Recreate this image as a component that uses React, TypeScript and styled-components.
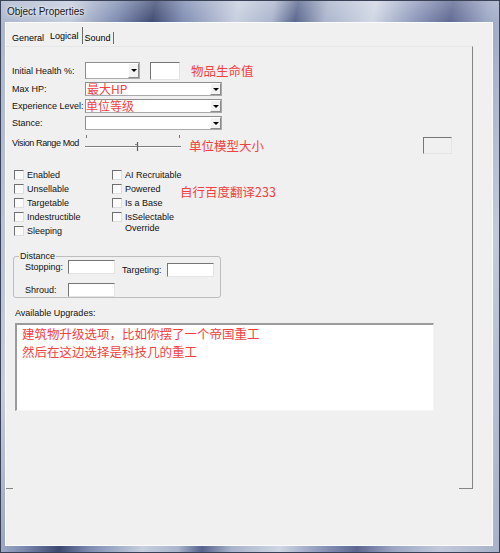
import React from "react";
import styled, { createGlobalStyle } from "styled-components";

const GlobalStyle = createGlobalStyle`
  html, body { margin: 0; padding: 0; background: #ffffff; }
  body { font-family: "Liberation Sans", "DejaVu Sans", sans-serif; }
  *, *::before, *::after { box-sizing: border-box; }
`;

const Window = styled.div`
  width: 500px;
  height: 553px;
  display: flex;
  flex-direction: column;
  padding: 0 6px 6px 4px;
  border: 1px solid #3a4257;
  background:
    linear-gradient(180deg, rgba(255, 255, 255, 0.22), rgba(255, 255, 255, 0) 24px),
    linear-gradient(100deg, #aab5cc 0%, #c3cbdc 12%, #7c8ab0 20%, #3c4870 26%, #7d8bb1 31%,
      #c6cedf 40%, #aab4cc 46%, #56638b 50%, #a9b3cb 55%, #cfd6e4 63%, #8d98bb 70%,
      #5c6690 76%, #9aa5c3 82%, #c2c9da 90%, #a7b1c8 100%);
`;

const TitleBar = styled.div`
  height: 21px;
  line-height: 21px;
  padding-left: 2px;
  font-size: 10px;
  color: #141414;
  text-shadow: 0 0 5px rgba(255, 255, 255, 0.95), 0 0 2px rgba(255, 255, 255, 0.9);
  white-space: nowrap;
`;

const Client = styled.div`
  flex: 1;
  display: flex;
  flex-direction: column;
  background: #f0f0f0;
  border: 1px solid #fbfcfe;
`;

const TabStrip = styled.div`
  height: 23px;
  display: flex;
  align-items: flex-start;
  padding-left: 6px;
`;

const Tab = styled.div<{ $active?: boolean; $gap: number }>`
  font-size: 9px;
  line-height: 12px;
  color: #000;
  margin-left: ${(p) => p.$gap}px;
  margin-top: ${(p) => (p.$active ? 7 : 9)}px;
  white-space: nowrap;
`;

const TabDivider = styled.div<{ $top: number; $gap: number }>`
  width: 1px;
  height: ${(p) => 21 - p.$top}px;
  margin-top: ${(p) => p.$top}px;
  margin-left: ${(p) => p.$gap}px;
  background: #6a6a6a;
`;

const Page = styled.div`
  flex: none;
  width: 467px;
  height: 443px;
  border-top: 1px solid #e6e6e6;
  border-right: 1px solid #858585;
  padding: 15px 0 0 6px;
  display: flex;
  flex-direction: column;
  background:
    linear-gradient(#858585, #858585) no-repeat left bottom / 7px 1px,
    linear-gradient(#858585, #858585) no-repeat right bottom / 13px 1px;
`;

const FieldRows = styled.div`
  display: flex;
  flex-direction: column;
  gap: 3px;
`;

const FieldRow = styled.div<{ $h: number }>`
  height: ${(p) => p.$h}px;
  display: flex;
  align-items: center;
`;

const FieldLabel = styled.div<{ $w?: number; $tight?: boolean }>`
  width: ${(p) => p.$w ?? 73}px;
  flex: none;
  font-size: 9px;
  line-height: 14px;
  letter-spacing: ${(p) => (p.$tight ? "-0.4px" : "0")};
  color: #111;
  white-space: nowrap;
`;

const Combo = styled.div<{ $w: number; $h: number }>`
  width: ${(p) => p.$w}px;
  height: ${(p) => p.$h}px;
  flex: none;
  display: flex;
  background: #ffffff;
  border: 1px solid #a9a9a9;
  border-top-color: #8e8e8e;
  border-left-color: #8e8e8e;
`;

const ComboValue = styled.div<{ $indent: number }>`
  flex: 1;
  padding-left: ${(p) => p.$indent}px;
  display: flex;
  align-items: center;
  overflow: visible;
  white-space: nowrap;
`;

const DropButton = styled.div`
  width: 11px;
  flex: none;
  display: flex;
  align-items: center;
  justify-content: center;
  background: #f2f2f2;
  border-left: 1px solid #ffffff;
  border-top: 1px solid #ffffff;
  border-right: 1px solid #8a8a8a;
  border-bottom: 1px solid #8a8a8a;
`;

const Arrow = styled.span`
  width: 0;
  height: 0;
  border-left: 3px solid transparent;
  border-right: 3px solid transparent;
  border-top: 3px solid #000;
`;

const TextBox = styled.div<{ $w: number; $h: number; $gap?: number; $hollow?: boolean; $drop?: number; $right?: number }>`
  width: ${(p) => p.$w}px;
  height: ${(p) => p.$h}px;
  flex: none;
  margin-left: ${(p) => p.$gap ?? 0}px;
  margin-right: ${(p) => p.$right ?? 0}px;
  margin-top: ${(p) => p.$drop ?? 0}px;
  background: ${(p) => (p.$hollow ? "transparent" : "#ffffff")};
  border-top: 1px solid #767676;
  border-left: 1px solid #767676;
  border-right: 1px solid #e4e4e4;
  border-bottom: 1px solid #e4e4e4;
`;

const Note = styled.div<{ $gap?: number; $drop?: number; $small?: boolean }>`
  margin-left: ${(p) => p.$gap ?? 0}px;
  margin-top: ${(p) => p.$drop ?? 0}px;
  font-family: "Noto Sans CJK SC", "Liberation Sans", sans-serif;
  font-size: ${(p) => (p.$small ? "12px" : "12.5px")};
  line-height: 14px;
  color: #f23f3f;
  white-space: nowrap;
`;

const SliderBox = styled.svg`
  flex: none;
  display: block;
`;

const CheckArea = styled.div`
  display: flex;
  margin: 15px 0 0 2px;
`;

const CheckColumn = styled.div<{ $w: number }>`
  width: ${(p) => p.$w}px;
  flex: none;
  display: flex;
  flex-direction: column;
`;

const CheckRow = styled.div`
  min-height: 14px;
  display: flex;
  align-items: flex-start;
`;

const CheckBox = styled.span`
  width: 10px;
  height: 10px;
  flex: none;
  margin-top: 2px;
  background: #fbfbfb;
  border-top: 1px solid #6f6f6f;
  border-left: 1px solid #6f6f6f;
  border-right: 1px solid #dedede;
  border-bottom: 1px solid #dedede;
`;

const CheckLabel = styled.span<{ $multi?: boolean }>`
  margin-left: 3px;
  font-size: 9px;
  line-height: ${(p) => (p.$multi ? "11px" : "14px")};
  padding-top: ${(p) => (p.$multi ? 2 : 0)}px;
  color: #111;
  white-space: pre;
`;

const Group = styled.fieldset`
  width: 208px;
  min-width: 0;
  margin: 14px 0 0 1px;
  padding: 0 6px 0 11px;
  border: 1px solid #bdbdbd;
  border-radius: 3px;
`;

const Legend = styled.legend`
  margin-left: -6px;
  padding: 0 1px;
  font-size: 9px;
  line-height: 8px;
  color: #111;
`;

const GroupRow = styled.div<{ $h: number; $gap?: number }>`
  height: ${(p) => p.$h}px;
  margin-top: ${(p) => p.$gap ?? 0}px;
  display: flex;
  align-items: flex-start;
`;

const GroupCell = styled.div<{ $gap?: number; $drop?: number }>`
  display: flex;
  align-items: center;
  margin-left: ${(p) => p.$gap ?? 0}px;
  margin-top: ${(p) => p.$drop ?? 0}px;
`;

const SectionLabel = styled.div`
  margin: 9px 0 0 3px;
  font-size: 9px;
  line-height: 12px;
  color: #111;
`;

const ListBox = styled.div`
  width: 419px;
  height: 88px;
  margin: 4px 0 0 3px;
  padding-left: 5px;
  background: #ffffff;
  border-top: 2px solid #9b9b9b;
  border-left: 2px solid #9b9b9b;
  border-right: 1px solid #f6f6f6;
  border-bottom: 1px solid #f6f6f6;
`;

const ListLine = styled.div`
  font-family: "Noto Sans CJK SC", "Liberation Sans", sans-serif;
  font-size: 12.5px;
  line-height: 18px;
  color: #f23f3f;
  white-space: nowrap;
`;

const Spacer = styled.div`
  margin-left: auto;
`;

function ComboBox({ w, h, children, indent = 1 }: { w: number; h: number; children?: React.ReactNode; indent?: number }) {
  return (
    <Combo $w={w} $h={h}>
      <ComboValue $indent={indent}>{children}</ComboValue>
      <DropButton>
        <Arrow />
      </DropButton>
    </Combo>
  );
}

function Slider() {
  return (
    <SliderBox width="96" height="20" viewBox="0 0 96 20">
      <line x1="1.5" y1="2" x2="1.5" y2="5" stroke="#777" strokeWidth="1" />
      <line x1="94.5" y1="2" x2="94.5" y2="5" stroke="#777" strokeWidth="1" />
      <line x1="0" y1="13.5" x2="96" y2="13.5" stroke="#7d7d7d" strokeWidth="1" />
      <line x1="0" y1="14.5" x2="96" y2="14.5" stroke="#ffffff" strokeWidth="1" />
      <line x1="50" y1="11.5" x2="52" y2="11.5" stroke="#8a8a8a" strokeWidth="1" />
      <line x1="52.5" y1="9" x2="52.5" y2="18" stroke="#606060" strokeWidth="1.2" />
    </SliderBox>
  );
}

function Check({ label, multi }: { label: string; multi?: boolean }) {
  return (
    <CheckRow>
      <CheckBox />
      <CheckLabel $multi={multi}>{label}</CheckLabel>
    </CheckRow>
  );
}

export default function App() {
  return (
    <>
      <GlobalStyle />
      <Window>
        <TitleBar>Object Properties</TitleBar>
        <Client>
          <TabStrip>
            <Tab $gap={0}>General</Tab>
            <Tab $gap={6} $active>Logical</Tab>
            <TabDivider $top={4} $gap={3} />
            <Tab $gap={2}>Sound</Tab>
            <TabDivider $top={9} $gap={2} />
          </TabStrip>
          <Page>
            <FieldRows>
              <FieldRow $h={17}>
                <FieldLabel>Initial Health %:</FieldLabel>
                <ComboBox w={55} h={17} />
                <TextBox $w={30} $h={18} $gap={10} />
                <Note $gap={11}>物品生命值</Note>
              </FieldRow>
              <FieldRow $h={14}>
                <FieldLabel>Max HP:</FieldLabel>
                <ComboBox w={137} h={14} indent={1}>
                  <Note $small>最大HP</Note>
                </ComboBox>
              </FieldRow>
              <FieldRow $h={14}>
                <FieldLabel>Experience Level:</FieldLabel>
                <ComboBox w={137} h={14} indent={0}>
                  <Note $small>单位等级</Note>
                </ComboBox>
              </FieldRow>
              <FieldRow $h={14}>
                <FieldLabel>Stance:</FieldLabel>
                <ComboBox w={137} h={14} />
              </FieldRow>
              <FieldRow $h={20}>
                <FieldLabel $tight>Vision Range Mod</FieldLabel>
                <Slider />
                <Note $gap={8} $drop={6}>单位模型大小</Note>
                <Spacer />
                <TextBox $w={29} $h={17} $hollow $drop={4} $right={20} />
              </FieldRow>
            </FieldRows>

            <CheckArea>
              <CheckColumn $w={98}>
                <Check label="Enabled" />
                <Check label="Unsellable" />
                <Check label="Targetable" />
                <Check label="Indestructible" />
                <Check label="Sleeping" />
              </CheckColumn>
              <CheckColumn $w={68}>
                <Check label="AI Recruitable" />
                <Check label="Powered" />
                <Check label="Is a Base" />
                <Check label={"IsSelectable\nOverride"} multi />
              </CheckColumn>
              <Note $drop={17}>自行百度翻译233</Note>
            </CheckArea>

            <Group>
              <Legend>Distance</Legend>
              <GroupRow $h={17}>
                <GroupCell>
                  <FieldLabel $w={43}>Stopping:</FieldLabel>
                  <TextBox $w={47} $h={14} />
                </GroupCell>
                <GroupCell $gap={7} $drop={3}>
                  <FieldLabel $w={45}>Targeting:</FieldLabel>
                  <TextBox $w={47} $h={14} />
                </GroupCell>
              </GroupRow>
              <GroupRow $h={14} $gap={6}>
                <GroupCell>
                  <FieldLabel $w={43}>Shroud:</FieldLabel>
                  <TextBox $w={47} $h={14} />
                </GroupCell>
              </GroupRow>
            </Group>

            <SectionLabel>Available Upgrades:</SectionLabel>
            <ListBox>
              <ListLine>建筑物升级选项，比如你摆了一个帝国重工</ListLine>
              <ListLine>然后在这边选择是科技几的重工</ListLine>
            </ListBox>
          </Page>
        </Client>
      </Window>
    </>
  );
}
